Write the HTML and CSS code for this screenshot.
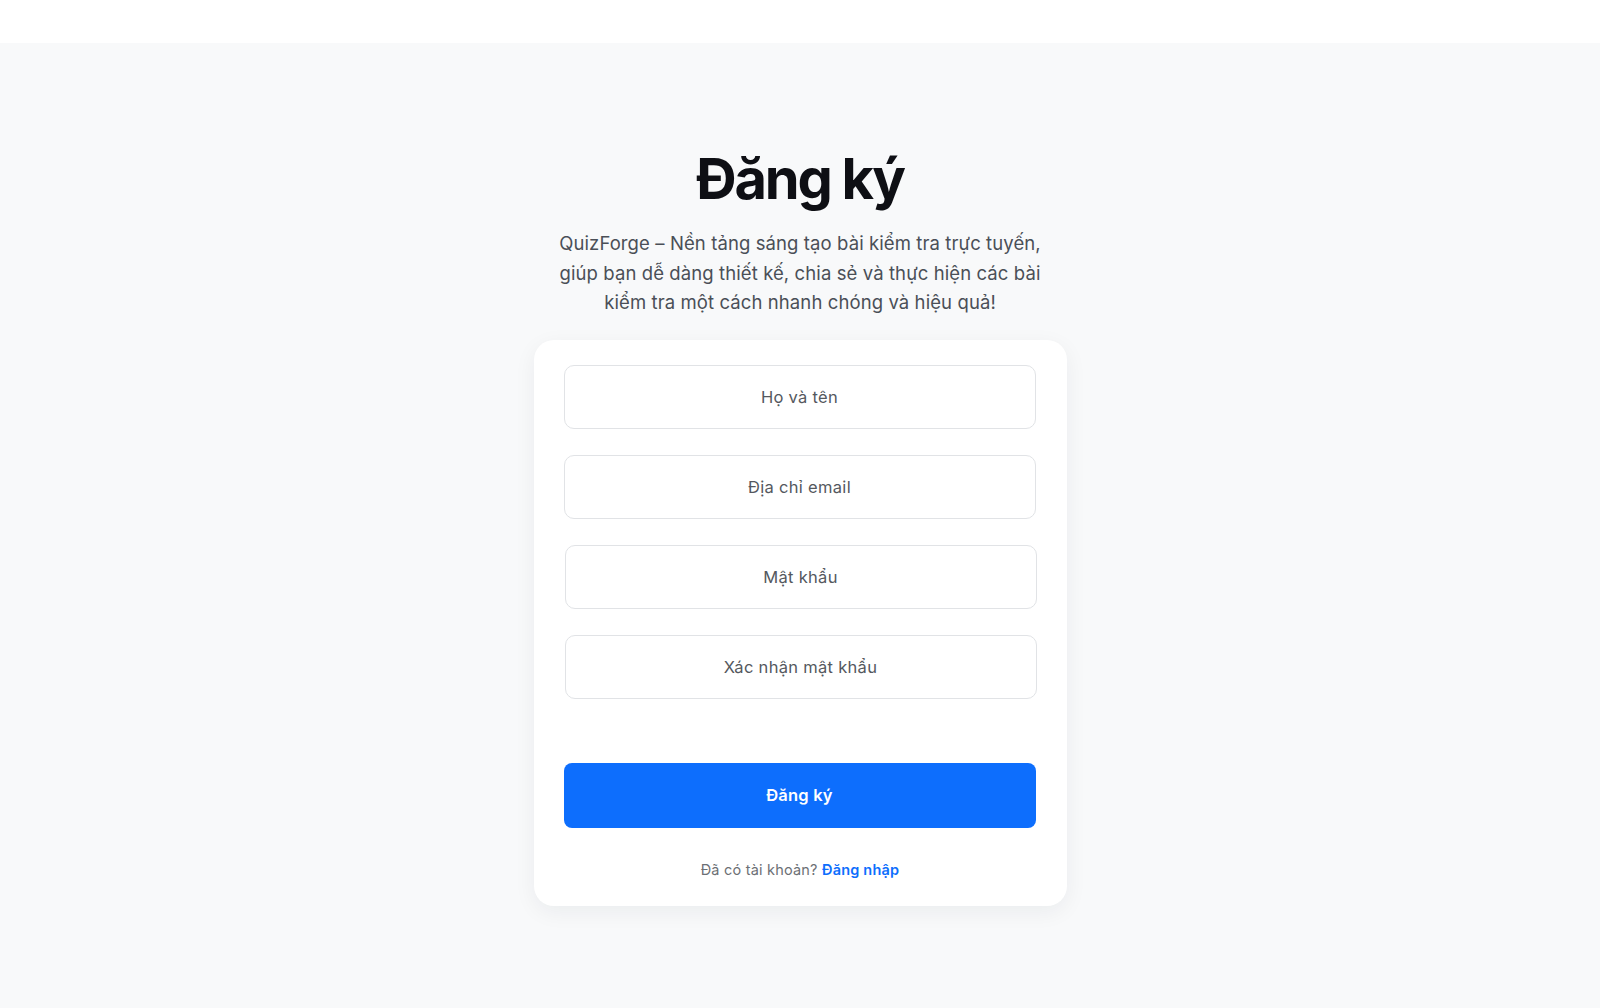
FILE: index.html
```html
<!DOCTYPE html>
<html lang="vi">
<head>
<meta charset="utf-8">
<title>Đăng ký – QuizForge</title>
<link rel="stylesheet" href="styles.css">
</head>
<body>
<header class="topbar"></header>
<main class="page">
  <section class="auth">
    <h1 class="auth-title">Đăng ký</h1>
    <p class="auth-lead">QuizForge – Nền tảng sáng tạo bài kiểm tra trực tuyến, giúp bạn dễ dàng thiết kế, chia sẻ và thực hiện các bài kiểm tra một cách nhanh chóng và hiệu quả!</p>
    <form class="card">
      <div class="fields">
        <input class="field" type="text" placeholder="Họ và tên">
        <input class="field" type="email" placeholder="Địa chỉ email">
        <input class="field field-shift" type="password" placeholder="Mật khẩu">
        <input class="field field-shift" type="password" placeholder="Xác nhận mật khẩu">
      </div>
      <button class="submit" type="button">Đăng ký</button>
      <p class="switch">Đã có tài khoản? <a href="#" class="switch-link">Đăng nhập</a></p>
    </form>
  </section>
</main>
</body>
</html>
```

FILE: styles.css
```css
* { box-sizing: border-box; }

html, body {
  margin: 0;
  padding: 0;
}

body {
  font-family: Inter, "Noto Sans", "DejaVu Sans", sans-serif;
  background: #ffffff;
  color: #212529;
}

.topbar {
  height: 43px;
  background: #ffffff;
}

.page {
  background: #f8f9fa;
  min-height: 965px;
  padding-top: 100px;
}

.auth {
  display: flex;
  flex-direction: column;
  align-items: center;
}

.auth-title {
  margin: 0;
  font-size: 56px;
  line-height: 72px;
  font-weight: 700;
  letter-spacing: -0.04em;
  color: #0e0f14;
}

.auth-lead {
  margin: 14px 0 0;
  max-width: 495px;
  text-align: center;
  font-size: 18.5px;
  line-height: 29.5px;
  letter-spacing: 0.1px;
  color: #4a4f57;
}

.card {
  margin-top: 22px;
  width: 533px;
  background: #ffffff;
  border-radius: 20px;
  box-shadow: 0 6px 22px rgba(20, 30, 50, 0.06);
  padding: 25px 30px 26px;
  display: flex;
  flex-direction: column;
}

.fields {
  display: flex;
  flex-direction: column;
  gap: 26px;
}

.field {
  height: 64px;
  width: 472px;
  border: 1px solid #e1e3e6;
  border-radius: 10px;
  background: #ffffff;
  text-align: center;
  font-family: inherit;
  font-size: 16.5px;
  letter-spacing: 0.3px;
  color: #212529;
  outline: none;
}

.field-shift {
  margin-left: 1px;
}

.field::placeholder {
  color: #54585e;
}

.submit {
  margin-top: 64px;
  height: 65px;
  width: 472px;
  border: 0;
  border-radius: 8px;
  background: #0d6efd;
  color: #ffffff;
  font-family: inherit;
  font-size: 16.5px;
  font-weight: 600;
  letter-spacing: 0.2px;
  cursor: pointer;
}

.switch {
  margin: 31px 0 0;
  text-align: center;
  font-size: 14.5px;
  line-height: 21px;
  letter-spacing: 0.2px;
  color: #6c7075;
}

.switch-link {
  color: #0d6efd;
  font-weight: 600;
  text-decoration: none;
}
```
